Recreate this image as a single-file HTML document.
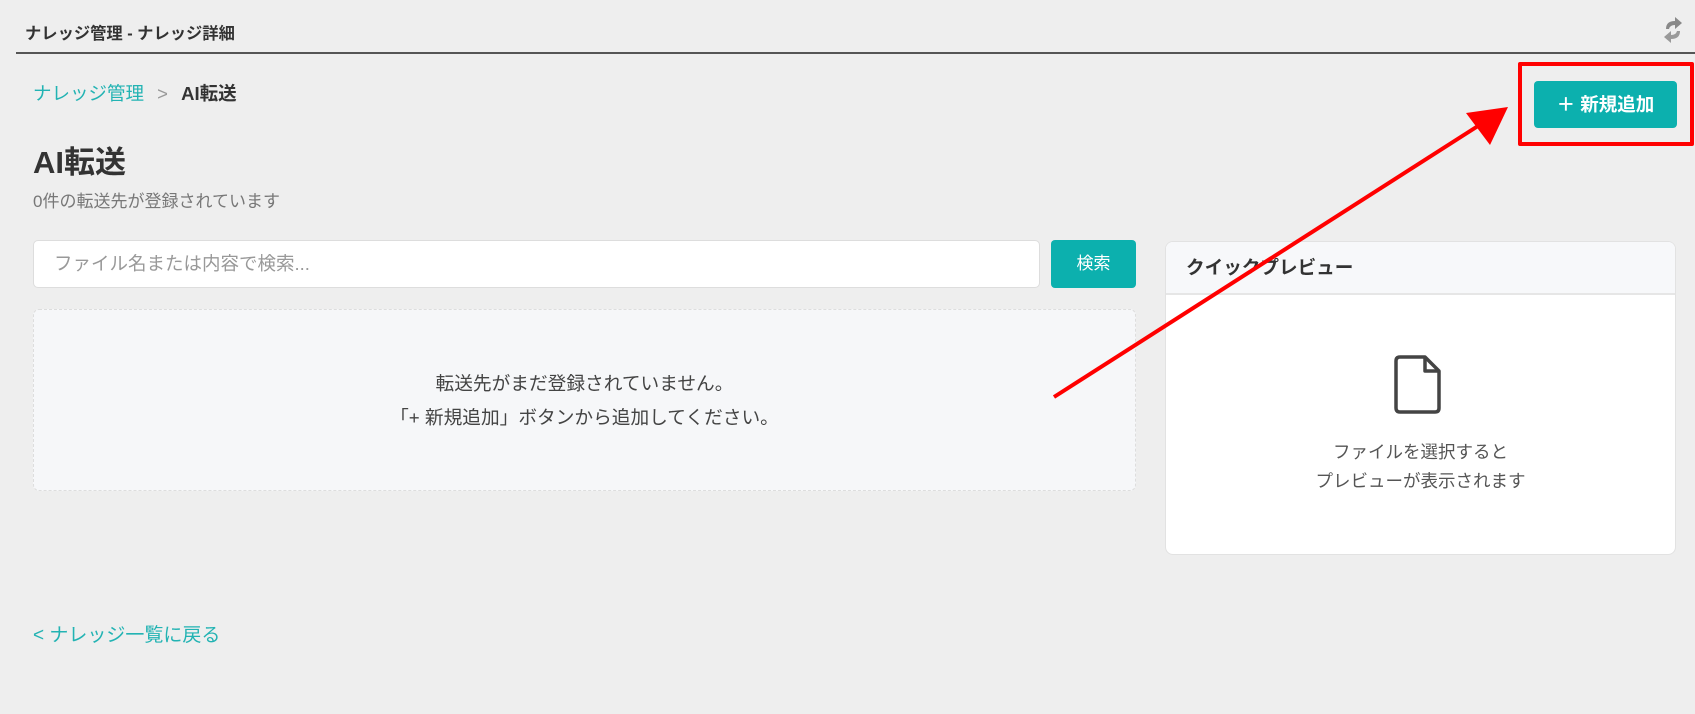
<!DOCTYPE html>
<html><head><meta charset="utf-8"><style>
*{box-sizing:border-box;margin:0;padding:0}
body{width:1695px;height:714px;background:#eeeeee;font-family:"Liberation Sans","Noto Sans CJK JP",sans-serif;position:relative;overflow:hidden;color:#333}
.abs{position:absolute}
</style></head><body>
<div class="abs" style="left:25px;top:20px;font-size:16.3px;font-weight:bold;color:#333">ナレッジ管理 - ナレッジ詳細</div>
<div class="abs" style="left:16px;top:52px;width:1679px;height:2px;background:#555"></div>
<svg class="abs" style="left:1660px;top:15px" width="26" height="30" viewBox="0 0 26 30"><path d="M6 14 Q6 6 15 6 L15 2 L22 8 L15 14 L15 10 Q10 10 9 14 Z" fill="#888"/><path d="M20 16 Q20 24 11 24 L11 28 L4 22 L11 16 L11 20 Q16 20 17 16 Z" fill="#999"/></svg>
<div class="abs" style="left:33px;top:80px;font-size:18.5px;color:#22b3b3">ナレッジ管理 <span style="color:#999;margin:0 8px">&gt;</span> <b style="color:#333">AI転送</b></div>
<div class="abs" style="left:33px;top:137px;font-size:31px;font-weight:bold;color:#333">AI転送</div>
<div class="abs" style="left:33px;top:187px;font-size:17px;color:#777">0件の転送先が登録されています</div>
<div class="abs" style="left:1534px;top:81px;width:143px;height:47px;background:#0cb0ae;border-radius:4px;color:#fff;font-weight:bold;font-size:18.5px;text-align:center;line-height:47px">＋ 新規追加</div>
<div class="abs" style="left:1518px;top:62px;width:176px;height:84px;border:4px solid #f00;border-radius:2px"></div>
<div class="abs" style="left:33px;top:240px;width:1007px;height:48px;background:#fff;border:1px solid #ddd;border-radius:5px;font-size:18.5px;color:#999;padding-left:20px;line-height:46px">ファイル名または内容で検索...</div>
<div class="abs" style="left:1051px;top:240px;width:85px;height:48px;background:#0cb0ae;border-radius:4px;color:#fff;font-size:17px;text-align:center;line-height:48px">検索</div>
<div class="abs" style="left:33px;top:309px;width:1103px;height:182px;background:#f6f7f9;border:1px dashed #ddd;border-radius:6px;text-align:center;font-size:18.7px;color:#444;padding-top:57px;line-height:34px">転送先がまだ登録されていません。<br>「+ 新規追加」ボタンから追加してください。</div>
<div class="abs" style="left:1165px;top:241px;width:511px;height:314px;background:#fff;border:1px solid #e2e2e2;border-radius:8px;overflow:hidden">
<div style="height:53px;background:#f7f8fa;border-bottom:2px solid #e6e6e6;font-size:18.6px;font-weight:bold;padding-left:20px;line-height:52px">クイックプレビュー</div>
<svg style="position:absolute;left:227px;top:112px" width="50" height="62" viewBox="0 0 50 62"><path d="M7 3 H32 L46 17 V54 Q46 58 42 58 H7 Q3 58 3 54 V7 Q3 3 7 3 Z" fill="none" stroke="#444" stroke-width="3.5" stroke-linejoin="round"/><path d="M32 3 V17 H46" fill="none" stroke="#444" stroke-width="3.5" stroke-linejoin="round"/></svg>
<div style="position:absolute;left:0;right:0;top:196px;text-align:center;font-size:17.5px;color:#555;line-height:29px">ファイルを選択すると<br>プレビューが表示されます</div>
</div>
<div class="abs" style="left:33px;top:620px;font-size:19px;color:#22b3b3">&lt; ナレッジ一覧に戻る</div>
<svg class="abs" style="left:0;top:0" width="1695" height="714"><line x1="1054" y1="397" x2="1478" y2="126" stroke="#f00" stroke-width="4"/><polygon points="1508,107 1466,113 1490,145" fill="#f00"/></svg>
</body></html>
